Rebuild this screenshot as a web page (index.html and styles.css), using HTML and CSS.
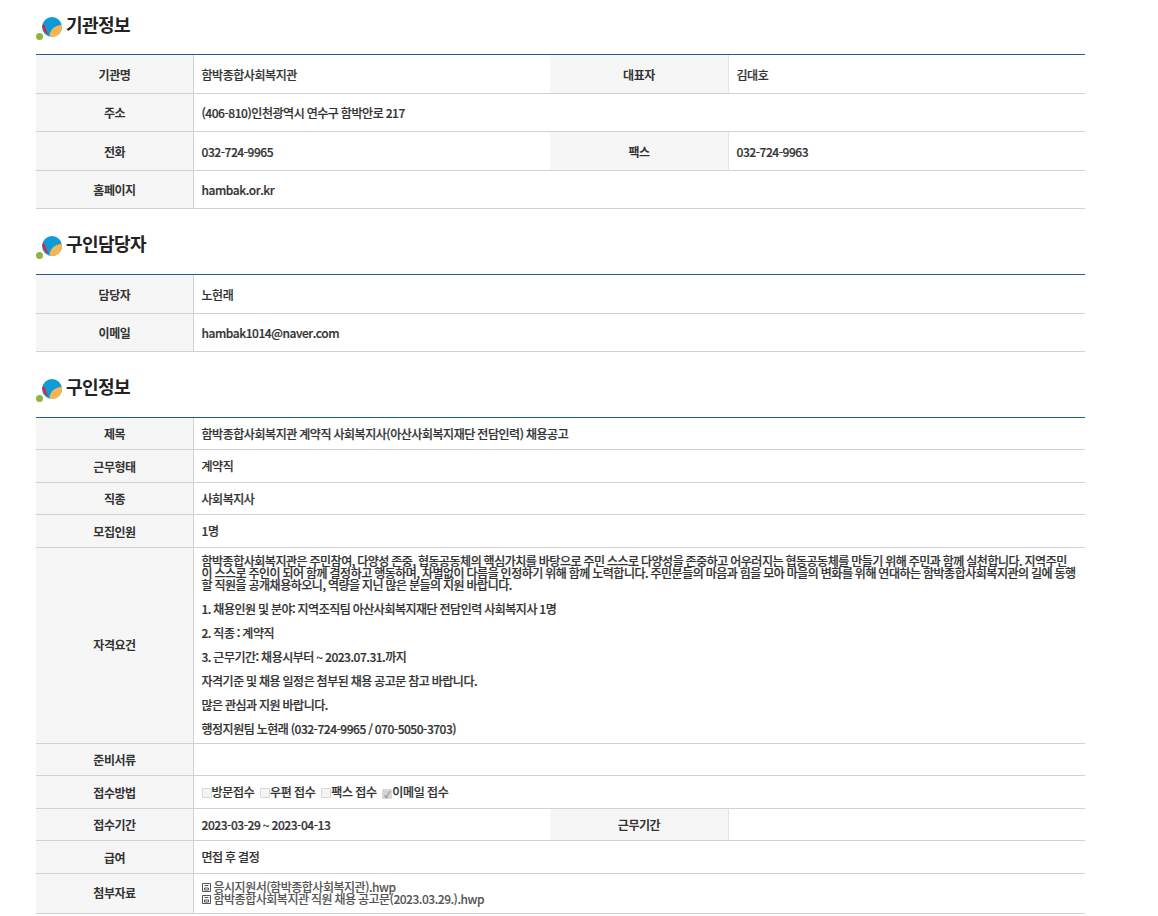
FILE: index.html
```html
<!DOCTYPE html>
<html lang="ko">
<head>
<meta charset="utf-8">
<title>구인정보</title>
<link rel="stylesheet" href="styles.css">
</head>
<body>
<div class="page">
  <h2 class="head h-a"><svg class="logo" viewBox="0 0 27 25" width="27" height="25"><circle cx="3.5" cy="20.5" r="3.5" fill="#8fb63a"/><circle cx="16" cy="11" r="10" fill="#0f9ad9"/><path d="M25.8 9A10 10 0 0 1 14.5 20.9C12.8 20 14 17 15 15 17 11.5 21 9 25.8 9Z" fill="#fbb452"/><path d="M6.2 9.5C7 8 8.5 8.5 9 10 9.5 12.5 10.5 15.5 12.5 18.5 9.5 17.5 7 14.5 6.2 9.5Z" fill="#e4222c"/></svg>기관정보</h2>
  <table class="tbl t-a">
    <colgroup><col class="c1"><col class="c2"><col class="c3"><col></colgroup>
    <tr><th>기관명</th><td>함박종합사회복지관</td><th class="mid">대표자</th><td>김대호</td></tr>
    <tr><th>주소</th><td colspan="3">(406-810)인천광역시 연수구 함박안로 217</td></tr>
    <tr><th>전화</th><td>032-724-9965</td><th class="mid">팩스</th><td>032-724-9963</td></tr>
    <tr><th>홈페이지</th><td colspan="3">hambak.or.kr</td></tr>
  </table>
  <h2 class="head h-b"><svg class="logo" viewBox="0 0 27 25" width="27" height="25"><circle cx="3.5" cy="20.5" r="3.5" fill="#8fb63a"/><circle cx="16" cy="11" r="10" fill="#0f9ad9"/><path d="M25.8 9A10 10 0 0 1 14.5 20.9C12.8 20 14 17 15 15 17 11.5 21 9 25.8 9Z" fill="#fbb452"/><path d="M6.2 9.5C7 8 8.5 8.5 9 10 9.5 12.5 10.5 15.5 12.5 18.5 9.5 17.5 7 14.5 6.2 9.5Z" fill="#e4222c"/></svg>구인담당자</h2>
  <table class="tbl t-a">
    <colgroup><col class="c1"><col></colgroup>
    <tr><th>담당자</th><td>노현래</td></tr>
    <tr><th>이메일</th><td>hambak1014@naver.com</td></tr>
  </table>
  <h2 class="head h-b"><svg class="logo" viewBox="0 0 27 25" width="27" height="25"><circle cx="3.5" cy="20.5" r="3.5" fill="#8fb63a"/><circle cx="16" cy="11" r="10" fill="#0f9ad9"/><path d="M25.8 9A10 10 0 0 1 14.5 20.9C12.8 20 14 17 15 15 17 11.5 21 9 25.8 9Z" fill="#fbb452"/><path d="M6.2 9.5C7 8 8.5 8.5 9 10 9.5 12.5 10.5 15.5 12.5 18.5 9.5 17.5 7 14.5 6.2 9.5Z" fill="#e4222c"/></svg>구인정보</h2>
  <table class="tbl t-b">
    <colgroup><col class="c1"><col class="c2"><col class="c3"><col></colgroup>
    <tr><th>제목</th><td colspan="3">함박종합사회복지관 계약직 사회복지사(아산사회복지재단 전담인력) 채용공고</td></tr>
    <tr class="r33"><th>근무형태</th><td colspan="3">계약직</td></tr>
    <tr><th>직종</th><td colspan="3">사회복지사</td></tr>
    <tr class="r33"><th>모집인원</th><td colspan="3">1명</td></tr>
    <tr class="r-long"><th>자격요건</th><td colspan="3" class="long">
      <p>함박종합사회복지관은 주민참여, 다양성 존중, 협동공동체의 핵심가치를 바탕으로 주민 스스로 다양성을 존중하고 어우러지는 협동공동체를 만들기 위해 주민과 함께 실천합니다. 지역주민이 스스로 주인이 되어 함께 결정하고 행동하며, 차별없이 다름을 인정하기 위해 함께 노력합니다. 주민분들의 마음과 힘을 모아 마을의 변화를 위해 연대하는 함박종합사회복지관의 길에 동행할 직원을 공개채용하오니, 역량을 지닌 많은 분들의 지원 바랍니다.</p>
      <p>1. 채용인원 및 분야: 지역조직팀 아산사회복지재단 전담인력 사회복지사 1명</p>
      <p>2. 직종 : 계약직</p>
      <p>3. 근무기간: 채용시부터 ~ 2023.07.31.까지</p>
      <p>자격기준 및 채용 일정은 첨부된 채용 공고문 참고 바랍니다.</p>
      <p>많은 관심과 지원 바랍니다.</p>
      <p>행정지원팀 노현래 (032-724-9965 / 070-5050-3703)</p>
    </td></tr>
    <tr><th>준비서류</th><td colspan="3"></td></tr>
    <tr class="r33 r-opt"><th>접수방법</th><td colspan="3"><span class="opt"><i class="box"></i>방문접수</span><span class="opt"><i class="box"></i>우편 접수</span><span class="opt"><i class="box"></i>팩스 접수</span><span class="opt"><i class="box on">✓</i>이메일 접수</span></td></tr>
    <tr><th>접수기간</th><td>2023-03-29 ~ 2023-04-13</td><th class="mid">근무기간</th><td></td></tr>
    <tr class="r33"><th>급여</th><td colspan="3">면접 후 결정</td></tr>
    <tr class="last"><th>첨부자료</th><td colspan="3" class="files">
      <a class="file"><svg class="fi" viewBox="0 0 9 9" width="9" height="9"><path d="M.5.5h8v8h-8zM2.5 2.5h4M2.5 5h4v2h-4z" fill="none" stroke="#555"/></svg>응시지원서(함박종합사회복지관).hwp</a>
      <a class="file"><svg class="fi" viewBox="0 0 9 9" width="9" height="9"><path d="M.5.5h8v8h-8zM2.5 2.5h4M2.5 5h4v2h-4z" fill="none" stroke="#555"/></svg>함박종합사회복지관 직원 채용 공고문(2023.03.29.).hwp</a>
    </td></tr>
  </table>
</div>
</body>
</html>
```
FILE: styles.css
```css
* { box-sizing: border-box; }
html, body { margin: 0; padding: 0; background: #fff; }
body { font-family: "Noto Sans CJK KR", "Noto Sans", sans-serif; color: #333; overflow: hidden; height: 916px; }
.page { width: 1085px; margin-left: 36px; }
.head { display: flex; align-items: flex-start; margin: 0; font-size: 18px; font-weight: 700; letter-spacing: -0.55px; color: #222; line-height: 24px; }
.logo { flex: none; margin-top: 4px; margin-right: 3px; }
.h-a { padding-top: 12px; height: 54px; }
.h-b { padding-top: 22px; height: 65px; }
.tbl { width: 1049px; border-collapse: separate; border-spacing: 0; table-layout: fixed; border-top: 1px solid #1d5a9f; font-size: 12px; letter-spacing: -0.45px; word-spacing: -0.5px; }
.c1 { width: 158px; }
.c2 { width: 356px; }
.c3 { width: 179px; }
th { background: #f6f6f6; font-weight: 700; color: #333; text-align: center; border-bottom: 1px solid #d2d2d2; border-right: 1px solid #d2d2d2; padding: 1px 0 0; }
th.mid { border-right: 1px solid #e4e4e4; }
td { font-weight: 500; color: #333; border-bottom: 1px solid #d2d2d2; padding: 1px 8px 0 7.5px; line-height: 12px; -webkit-text-stroke: 0.2px #333; }
.t-a td { padding-top: 2px; }
.t-a tr { height: 38.5px; }
.t-b tr { height: 32px; }
.t-b tr.r33 { height: 33px; }
.t-b tr.r-long { height: 196px; }
.t-b tr.last { height: 40px; }
.t-b th, .t-b td { padding-top: 0; }
.t-b tr.r-opt th, .t-b tr.r-opt td { padding-top: 1px; }
.t-b tr.r-long th { padding-bottom: 2px; }
.t-b tr.last th { padding-bottom: 3px; }
.t-b td.long { padding: 7px 9px 0 7.5px; vertical-align: top; letter-spacing: -0.48px; }
.long p { margin: 0 0 12px; line-height: 12px; }
.long p:last-child { margin-bottom: 0; }
.opt { margin-right: 5.6px; letter-spacing: -0.3px; }
.box { display: inline-block; width: 10px; height: 10px; border: 1px solid #d8d8d8; border-radius: 1px; background: #f4f4f4; vertical-align: -1px; font-size: 9px; line-height: 9px; font-style: normal; color: #999; text-align: center; -webkit-text-stroke: 0; }
.box.on { background: #d5d5d5; color: #888; }
.t-b td.files { padding-top: 4px; padding-bottom: 6px; }
.file { display: block; color: #555; line-height: 12px; letter-spacing: -0.48px; -webkit-text-stroke: 0.1px #555; }
.fi { margin-right: 3px; }
```
